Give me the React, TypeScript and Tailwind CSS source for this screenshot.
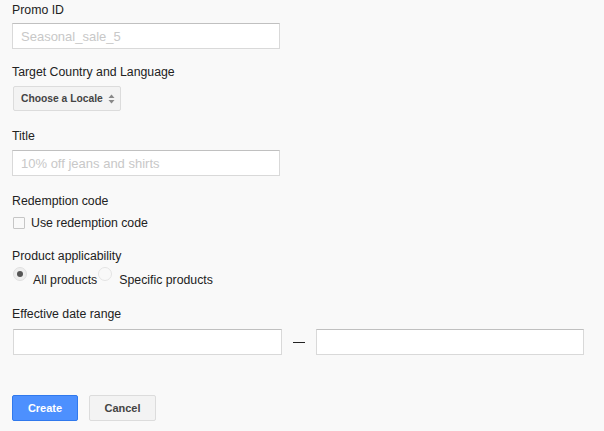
export default function App() {
  const font = { fontFamily: '"Liberation Sans", Arial, sans-serif' };
  return (
    <div className="min-h-[431px] w-[604px] bg-[#f9f9f9] text-[#222] text-[12.3px] pl-[12px] pt-[3px]" style={font}>
      <div className="leading-[15px]">Promo ID</div>
      <input
        placeholder="Seasonal_sale_5"
        className="mt-[5px] block w-[268px] h-[26px] border border-[#d9d9d9] border-t-[#c0c0c0] bg-white px-[8px] text-[13px] placeholder:text-[#c8c8c8] outline-none"
      />

      <div className="mt-[16px] leading-[15px]">Target Country and Language</div>
      <button className="mt-[6px] ml-[1px] flex items-center gap-[5px] h-[25px] pl-[7px] pr-[5px] whitespace-nowrap border border-[#dcdcdc] bg-[#f3f3f3] rounded-[2px] text-[10.3px] font-bold text-[#444]">
        Choose a Locale
        <svg width="7" height="10" viewBox="0 0 7 10">
          <path d="M3.5 0.5 L6.5 4 H0.5 Z" fill="#888" />
          <path d="M3.5 9.5 L6.5 6 H0.5 Z" fill="#888" />
        </svg>
      </button>

      <div className="mt-[18px] leading-[15px]">Title</div>
      <input
        placeholder="10% off jeans and shirts"
        className="mt-[6px] block w-[268px] h-[26px] border border-[#d9d9d9] border-t-[#c0c0c0] bg-white px-[8px] text-[13px] placeholder:text-[#c8c8c8] outline-none"
      />

      <div className="mt-[18px] leading-[15px]">Redemption code</div>
      <label className="mt-[6px] flex items-center h-[16px]">
        <span className="ml-[1px] w-[12px] h-[12px] border border-[#c6c6c6] bg-[#f9f9f9] rounded-[1px]" />
        <span className="ml-[6px]">Use redemption code</span>
      </label>

      <div className="mt-[18px] leading-[15px]">Product applicability</div>
      <div className="mt-[3px] flex items-start h-[18px]">
        <span className="ml-[1px] w-[14px] h-[14px] rounded-full border border-[#e0e0e0] bg-[#eeeeee] flex items-center justify-center">
          <span className="w-[6px] h-[6px] rounded-full bg-[#555]" />
        </span>
        <span className="ml-[6px] mt-[4px]">All products</span>
        <span className="ml-[1px] w-[14px] h-[14px] rounded-full border border-[#e4e4e4] bg-[#f9f9f9]" />
        <span className="ml-[7px] mt-[4px]">Specific products</span>
      </div>

      <div className="mt-[22px] leading-[15px]">Effective date range</div>
      <div className="mt-[7px] flex items-center">
        <input className="ml-[1px] block w-[269px] h-[26px] border border-[#d9d9d9] border-t-[#c0c0c0] bg-white outline-none" />
        <span className="mx-[11px] w-[12px] h-[1px] bg-[#222]" />
        <input className="block w-[268px] h-[26px] border border-[#d9d9d9] border-t-[#c0c0c0] bg-white outline-none" />
      </div>

      <div className="mt-[40px] flex gap-[11px]">
        <button className="w-[66px] h-[26px] rounded-[2px] border border-[#3079ed] bg-[#4d90fe] text-white text-[11px] font-bold">
          Create
        </button>
        <button className="w-[67px] h-[26px] rounded-[2px] border border-[#dcdcdc] bg-[#f3f3f3] text-[#444] text-[11px] font-bold">
          Cancel
        </button>
      </div>
    </div>
  );
}
